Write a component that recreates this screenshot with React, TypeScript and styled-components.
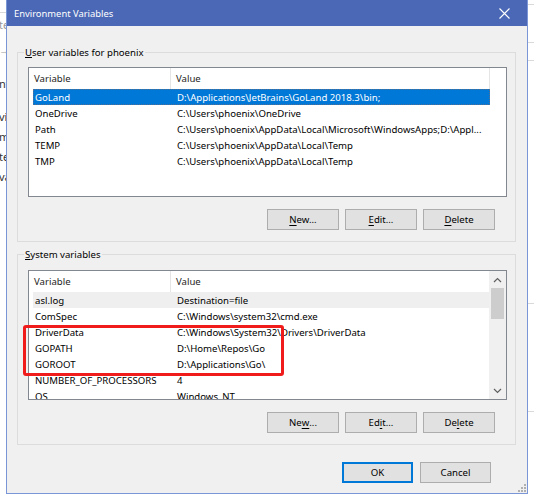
import React from "react";
import styled, { createGlobalStyle, css } from "styled-components";

const GlobalStyle = createGlobalStyle`
  html, body { margin: 0; padding: 0; background: #ffffff; }
  body { width: 534px; height: 500px; overflow: hidden; }
  * { box-sizing: border-box; }
`;

const FONT = `"Segoe UI", "Noto Sans", "Liberation Sans", sans-serif`;

const Desktop = styled.div`
  position: relative;
  width: 534px;
  height: 500px;
  overflow: hidden;
  background: #ffffff;
  font-family: ${FONT};
  font-size: 9.6px;
  color: #000;
`;

const BehindStrip = styled.div<{ $side: "left" | "right" }>`
  position: absolute;
  top: 0;
  ${(p) => (p.$side === "left" ? "left: 0;" : "right: 0;")}
  width: ${(p) => (p.$side === "left" ? 6 : 7)}px;
  height: 500px;
  overflow: hidden;
`;

const Fragment = styled.span<{ $top: number; $muted?: boolean }>`
  position: absolute;
  left: -1px;
  top: ${(p) => p.$top}px;
  white-space: nowrap;
  font-size: 11px;
  line-height: 14px;
  color: ${(p) => (p.$muted ? "#9a9a9a" : "#333")};
`;

const Rule = styled.div<{ $top: number }>`
  position: absolute;
  left: 0;
  right: 0;
  top: ${(p) => p.$top}px;
  height: 1px;
  background: #d9d9d9;
`;

const Window = styled.div`
  position: absolute;
  left: 6px;
  top: 0;
  width: 522px;
  height: 494px;
  background: #f0f0f0;
  border: 1px solid #7a96d6;
  border-top: none;
  display: flex;
  flex-direction: column;
`;

const TitleBar = styled.div`
  height: 26px;
  flex: none;
  background: #4a68b6;
  color: #ffffff;
  display: flex;
  align-items: center;
  justify-content: space-between;
  padding-left: 7px;
  font-size: 9.4px;
`;

const CloseButton = styled.div`
  width: 46px;
  height: 26px;
  display: flex;
  align-items: center;
  justify-content: center;
`;

const Body = styled.div`
  display: flex;
  flex-direction: column;
  padding: 26px 11px 0 10px;
  gap: 12px;
`;

const GroupBox = styled.div<{ $top: number }>`
  position: relative;
  border: 1px solid #dcdcdc;
  padding: ${(p) => p.$top}px 8px 11px 10px;
  display: flex;
  flex-direction: column;
  gap: 12px;
`;

const GroupLabel = styled.div`
  position: absolute;
  top: -8px;
  left: 6px;
  padding: 0 1px;
  line-height: 15px;
  background: #f0f0f0;
`;

const ListWrap = styled.div`
  position: relative;
`;

const ListBox = styled.div`
  height: 130px;
  border: 1px solid #828790;
  background: #ffffff;
  display: flex;
  overflow: hidden;
`;

const ListMain = styled.div`
  flex: 1;
  display: flex;
  flex-direction: column;
  overflow: hidden;
`;

const Header = styled.div`
  height: 21px;
  flex: none;
  display: flex;
`;

const HeaderCell = styled.div<{ $w: number; $pad: number }>`
  width: ${(p) => p.$w}px;
  flex: none;
  padding-left: ${(p) => p.$pad}px;
  border-right: 1px solid #e5e5e5;
  display: flex;
  align-items: center;
  color: #1e1e1e;
`;

const Row = styled.div<{ $state?: "focus" | "inactive" }>`
  height: 16px;
  flex: none;
  width: 457px;
  margin-left: 4px;
  display: flex;
  align-items: center;
  white-space: nowrap;
  ${(p) =>
    p.$state === "focus" &&
    css`
      background: #0078d7;
      color: #ffffff;
      outline: 1px dotted #5a6f8e;
      outline-offset: -1px;
    `}
  ${(p) =>
    p.$state === "inactive" &&
    css`
      background: #efefef;
    `}
`;

const Cell = styled.div<{ $w?: number; $pad: number }>`
  ${(p) => (p.$w ? `width: ${p.$w}px; flex: none;` : "flex: 1;")}
  padding-left: ${(p) => p.$pad}px;
  overflow: hidden;
  text-overflow: ellipsis;
`;

const ScrollBar = styled.div`
  width: 17px;
  flex: none;
  background: #f0f0f0;
  display: flex;
  flex-direction: column;
`;

const ScrollArrow = styled.div`
  height: 17px;
  flex: none;
  display: flex;
  align-items: center;
  justify-content: center;
`;

const ScrollTrack = styled.div`
  flex: 1;
  padding: 0 2px;
`;

const Thumb = styled.div`
  height: 31px;
  background: #cdcdcd;
`;

const Highlight = styled.div`
  position: absolute;
  left: -5px;
  top: 55px;
  width: 261px;
  height: 51px;
  border: 3px solid #f01c1c;
  border-radius: 3px;
  pointer-events: none;
`;

const ButtonRow = styled.div<{ $gap: number; $right: number }>`
  display: flex;
  justify-content: flex-end;
  gap: ${(p) => p.$gap}px;
  padding-right: ${(p) => p.$right}px;
`;

const Button = styled.button<{ $w?: number; $default?: boolean }>`
  width: ${(p) => p.$w ?? 72}px;
  height: 21px;
  padding: 0;
  margin: 0;
  background: #e1e1e1;
  border: 1px solid ${(p) => (p.$default ? "#0078d7" : "#adadad")};
  ${(p) => p.$default && "box-shadow: inset 0 0 0 1px #0078d7;"}
  font-family: ${FONT};
  font-size: 9.6px;
  color: #000;
  display: flex;
  align-items: center;
  justify-content: center;
  u { text-decoration-thickness: 1px; text-underline-offset: 2px; }
`;

const Footer = styled.div`
  margin-top: 17px;
`;

const Grip = styled.svg`
  position: absolute;
  right: 1px;
  bottom: 1px;
`;

type Item = { name: string; value: string; state?: "focus" | "inactive" };

const userVars: Item[] = [
  { name: "GoLand", value: "D:\\Applications\\JetBrains\\GoLand 2018.3\\bin;", state: "focus" },
  { name: "OneDrive", value: "C:\\Users\\phoenix\\OneDrive" },
  { name: "Path", value: "C:\\Users\\phoenix\\AppData\\Local\\Microsoft\\WindowsApps;D:\\Appl..." },
  { name: "TEMP", value: "C:\\Users\\phoenix\\AppData\\Local\\Temp" },
  { name: "TMP", value: "C:\\Users\\phoenix\\AppData\\Local\\Temp" },
];

const systemVars: Item[] = [
  { name: "asl.log", value: "Destination=file", state: "inactive" },
  { name: "ComSpec", value: "C:\\Windows\\system32\\cmd.exe" },
  { name: "DriverData", value: "C:\\Windows\\System32\\Drivers\\DriverData" },
  { name: "GOPATH", value: "D:\\Home\\Repos\\Go" },
  { name: "GOROOT", value: "D:\\Applications\\Go\\" },
  { name: "NUMBER_OF_PROCESSORS", value: "4" },
  { name: "OS", value: "Windows_NT" },
  { name: "Path", value: "C:\\Windows\\system32;C:\\Windows;" },
];

const Chevron = ({ up }: { up?: boolean }) => (
  <svg width="9" height="6" viewBox="0 0 9 6">
    <polyline
      points={up ? "1,5 4.5,1.5 8,5" : "1,1 4.5,4.5 8,1"}
      fill="none"
      stroke="#606060"
      strokeWidth="1.2"
    />
  </svg>
);

const VarList = ({ items, scroll }: { items: Item[]; scroll?: boolean }) => (
  <ListBox>
    <ListMain>
      <Header>
        <HeaderCell $w={142} $pad={5}>Variable</HeaderCell>
        <HeaderCell $w={319} $pad={5}>Value</HeaderCell>
      </Header>
      {items.map((it) => (
        <Row key={it.name} $state={it.state}>
          <Cell $w={138} $pad={2}>{it.name}</Cell>
          <Cell $pad={6}>{it.value}</Cell>
        </Row>
      ))}
    </ListMain>
    {scroll && (
      <ScrollBar>
        <ScrollArrow><Chevron up /></ScrollArrow>
        <ScrollTrack><Thumb /></ScrollTrack>
        <ScrollArrow><Chevron /></ScrollArrow>
      </ScrollBar>
    )}
  </ListBox>
);

export default function App() {
  return (
    <>
      <GlobalStyle />
      <Desktop>
        <BehindStrip $side="left">
          <Rule $top={12} />
          <Fragment $top={18} $muted>te</Fragment>
          <Fragment $top={43} $muted>→</Fragment>
          <Fragment $top={77}>nf</Fragment>
          <Fragment $top={110}>vi</Fragment>
          <Fragment $top={130}>m</Fragment>
          <Fragment $top={150}>te</Fragment>
          <Fragment $top={170}>va</Fragment>
        </BehindStrip>
        <BehindStrip $side="right">
          <Rule $top={4} />
          <Rule $top={42} />
          <Rule $top={60} />
          <Rule $top={303} />
          <Rule $top={411} />
        </BehindStrip>

        <Window>
          <TitleBar>
            <span>Environment Variables</span>
            <CloseButton>
              <svg width="11" height="11" viewBox="0 0 11 11">
                <path d="M0.5 0.5 L10.5 10.5 M10.5 0.5 L0.5 10.5" stroke="#ffffff" strokeWidth="1.1" />
              </svg>
            </CloseButton>
          </TitleBar>

          <Body>
            <GroupBox $top={14}>
              <GroupLabel><u>U</u>ser variables for phoenix</GroupLabel>
              <ListWrap>
                <VarList items={userVars} />
              </ListWrap>
              <ButtonRow $gap={6} $right={12}>
                <Button><u>N</u>ew...</Button>
                <Button><u>E</u>dit...</Button>
                <Button><u>D</u>elete</Button>
              </ButtonRow>
            </GroupBox>

            <GroupBox $top={15}>
              <GroupLabel><u>S</u>ystem variables</GroupLabel>
              <ListWrap>
                <VarList items={systemVars} scroll />
                <Highlight />
              </ListWrap>
              <ButtonRow $gap={6} $right={12}>
                <Button>Ne<u>w</u>...</Button>
                <Button>Ed<u>i</u>t...</Button>
                <Button>De<u>l</u>ete</Button>
              </ButtonRow>
            </GroupBox>
          </Body>

          <Footer>
            <ButtonRow $gap={7} $right={36}>
              <Button $w={71} $default>OK</Button>
              <Button $w={71}>Cancel</Button>
            </ButtonRow>
          </Footer>

          <Grip width="8" height="8" viewBox="0 0 8 8">
            {[
              [6, 0], [6, 3], [3, 3], [6, 6], [3, 6], [0, 6],
            ].map(([x, y]) => (
              <rect key={`${x}-${y}`} x={x} y={y} width="2" height="2" fill="#b0b0b0" />
            ))}
          </Grip>
        </Window>
      </Desktop>
    </>
  );
}
